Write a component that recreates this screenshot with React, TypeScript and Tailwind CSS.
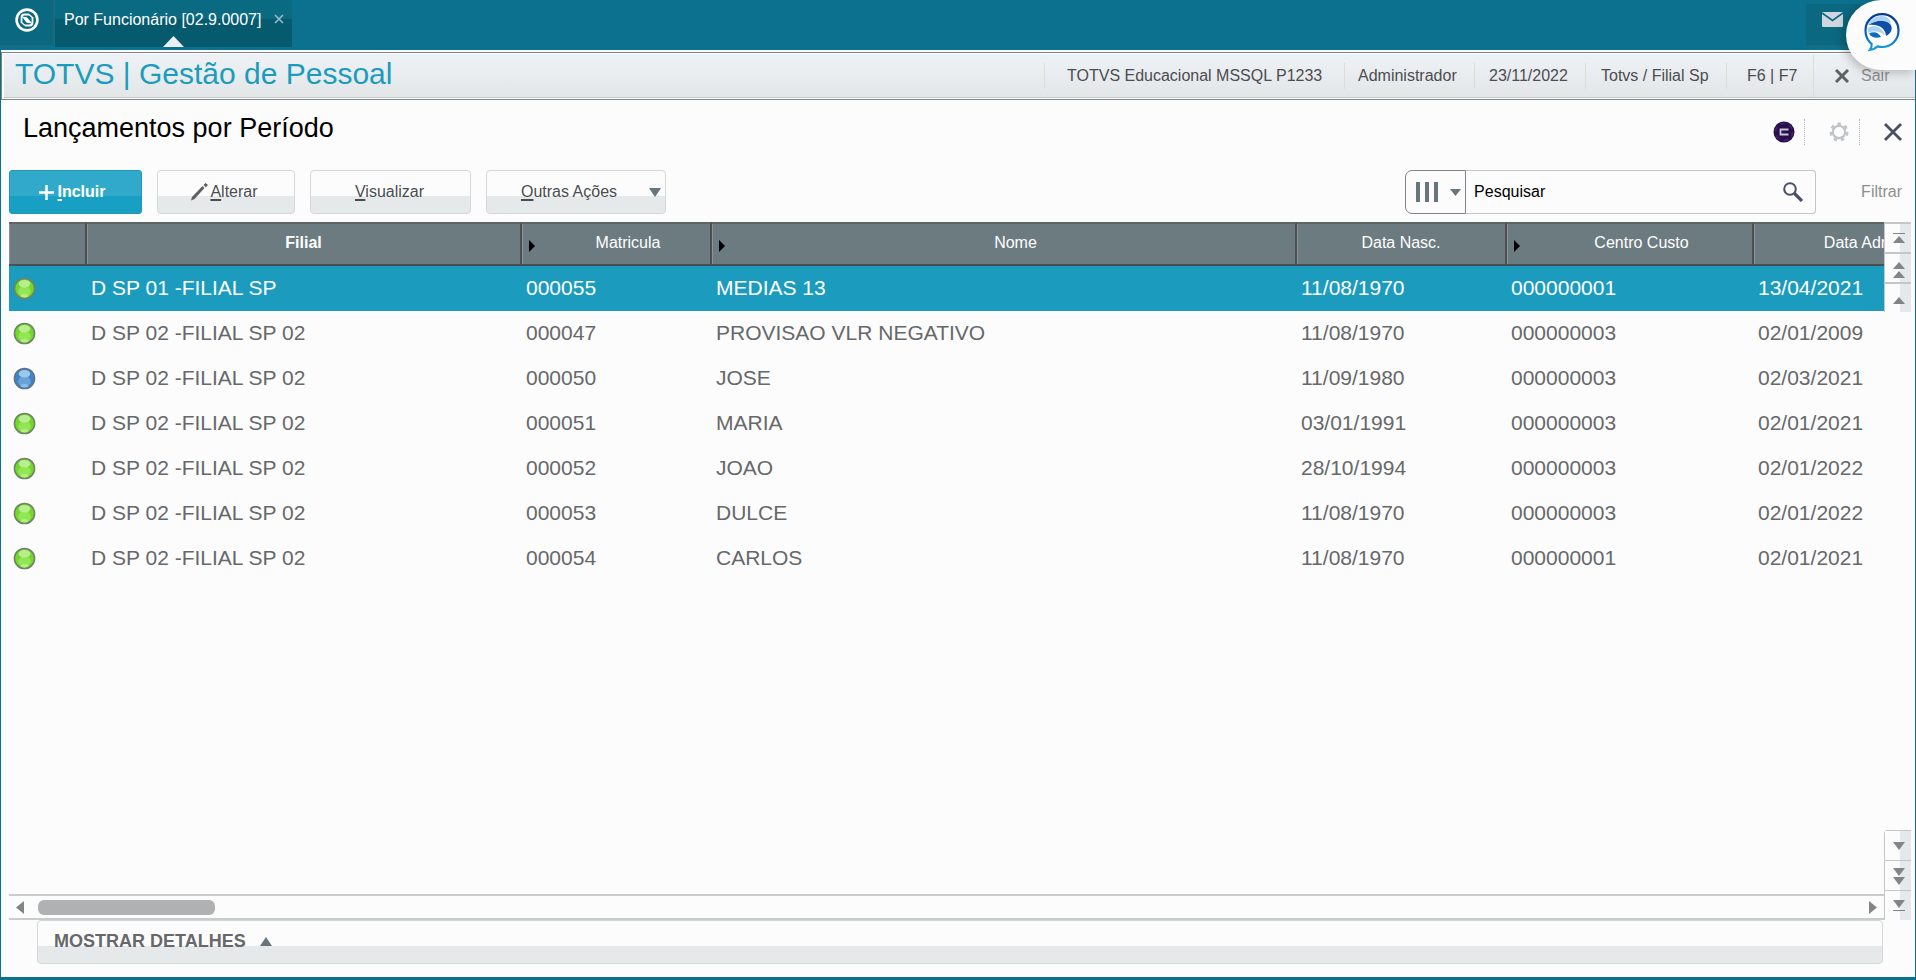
import { useState } from 'react';

type Employee = {
  status: 'green' | 'blue';
  filial: string;
  matricula: string;
  nome: string;
  nasc: string;
  custo: string;
  admissao: string;
};

const employees: Employee[] = [
  { status: 'green', filial: 'D SP 01 -FILIAL SP', matricula: '000055', nome: 'MEDIAS 13', nasc: '11/08/1970', custo: '000000001', admissao: '13/04/2021' },
  { status: 'green', filial: 'D SP 02 -FILIAL SP 02', matricula: '000047', nome: 'PROVISAO VLR NEGATIVO', nasc: '11/08/1970', custo: '000000003', admissao: '02/01/2009' },
  { status: 'blue', filial: 'D SP 02 -FILIAL SP 02', matricula: '000050', nome: 'JOSE', nasc: '11/09/1980', custo: '000000003', admissao: '02/03/2021' },
  { status: 'green', filial: 'D SP 02 -FILIAL SP 02', matricula: '000051', nome: 'MARIA', nasc: '03/01/1991', custo: '000000003', admissao: '02/01/2021' },
  { status: 'green', filial: 'D SP 02 -FILIAL SP 02', matricula: '000052', nome: 'JOAO', nasc: '28/10/1994', custo: '000000003', admissao: '02/01/2022' },
  { status: 'green', filial: 'D SP 02 -FILIAL SP 02', matricula: '000053', nome: 'DULCE', nasc: '11/08/1970', custo: '000000003', admissao: '02/01/2022' },
  { status: 'green', filial: 'D SP 02 -FILIAL SP 02', matricula: '000054', nome: 'CARLOS', nasc: '11/08/1970', custo: '000000001', admissao: '02/01/2021' },
];

const columns = [
  { label: '', width: 'w-[78px]', sortable: false },
  { label: 'Filial', width: 'w-[435px]', sortable: false, bold: true },
  { label: 'Matricula', width: 'w-[190px]', sortable: true },
  { label: 'Nome', width: 'w-[585px]', sortable: true },
  { label: 'Data Nasc.', width: 'w-[210px]', sortable: false },
  { label: 'Centro Custo', width: 'w-[247px]', sortable: true },
  { label: 'Data Admis.', width: 'w-[228px]', sortable: false },
];

const splitButton =
  'flex h-11 items-center justify-center rounded-[4px] border border-[#d3d8d8] bg-linear-to-b from-[#fcfcfc] from-60% to-[#e5e9ea] to-60% text-base text-[#4a4d50]';

function Logo() {
  return (
    <svg viewBox="0 0 24 24" className="size-6" fill="none" stroke="#fff">
      <circle cx="12" cy="12" r="10.4" strokeWidth="2.6" />
      <path d="M6.500 15V9.500C6.500 7.500 8 6.500 9.500 6.500H14" strokeWidth="1.800" />
      <path d="M17.500 9v5.500c0 2-1.500 3-3 3H10" strokeWidth="1.800" />
      <path d="M8.500 9.500l3 .5 4 4.500-3.500-.5z" fill="#fff" strokeWidth="1.400" />
      <path d="M14 6.500l3.500 3M6.500 14.500l3.500 3" strokeWidth="1.400" />
    </svg>
  );
}

function ChatLogo() {
  return (
    <svg viewBox="0 0 38 40" className="h-10 w-[38px]">
      <defs>
        <linearGradient id="ring" x1="0" y1="0" x2="0" y2="1">
          <stop offset="0" stopColor="#063a8c" />
          <stop offset="0.5" stopColor="#0a5cb5" />
          <stop offset="1" stopColor="#10a5e0" />
        </linearGradient>
      </defs>
      <path d="M19 2.200c9.400 0 16.500 7 16.500 16.300S28.500 35 19 35c-1.500 0-3-.2-4.400-.6-2.500 2.300-5 3.400-7.800 3.600 1.700-2.200 2.200-4 1.800-6.200C4.700 28.800 2.500 24 2.500 18.500 2.500 9.200 9.600 2.200 19 2.200z" fill="#fff" stroke="url(#ring)" strokeWidth="2.200" />
      <path d="M5 13C7.500 7 12.500 4 18.500 4c5.500 0 9 3.500 9.500 8-5-4.500-14-5-23 1z" fill="#a9d2f0" />
      <path d="M5.500 13c6-4.500 16-6 21-1.500 4.500 4 1.500 10.500-3.500 12.500 0-6-6-12.500-17.500-11z" fill="#0b4fa8" />
      <path d="M4.500 16c6-3.500 15-2 17.500 8-3-4-9-6-17-3z" fill="#a9d2f0" />
      <path d="M6 21.500c4.500-2.500 9.500-1.500 12 3.500-4.500 1.500-9.500 1-12-3.500z" fill="#0b6cc0" />
    </svg>
  );
}

function StatusBall({ color }: { color: Employee['status'] }) {
  const green = color === 'green';
  return (
    <svg viewBox="0 0 24 24" className="block size-[23px]" role="img" aria-label={green ? 'Ativo' : 'Férias'}>
      <circle cx="12" cy="12" r="10.500" fill={green ? '#75d62c' : '#3f84c8'} stroke={green ? '#6d8468' : '#5f7488'} strokeWidth="1.600" />
      <ellipse cx="12" cy="15" rx="6.500" ry="5.500" fill={green ? '#92e654' : '#6aa2d8'} />
      <ellipse cx="12" cy="7" rx="6" ry="4" fill={green ? '#b8ee90' : '#9cc8ec'} />
      <ellipse cx="12" cy="19.500" rx="4" ry="1.800" fill={green ? '#b4f080' : '#8cc0e8'} />
    </svg>
  );
}

function Triangle({ dir, className }: { dir: 'up' | 'down' | 'left' | 'right'; className: string }) {
  const points = {
    up: '0,10 5,0 10,10',
    down: '0,0 10,0 5,10',
    left: '10,0 10,10 0,5',
    right: '0,0 10,5 0,10',
  };
  return (
    <svg viewBox="0 0 10 10" preserveAspectRatio="none" className={className} fill="currentColor">
      <polygon points={points[dir]} />
    </svg>
  );
}

function TopBar() {
  return (
    <div className="flex h-[50px] shrink-0 bg-[#0b718e]">
      <button aria-label="Menu" className="flex h-[46px] w-[54px] items-start justify-center border-r border-b border-[#2b6272] bg-[#0a6880] pt-2">
        <Logo />
      </button>
      <div className="relative ml-px flex h-[47px] w-[237px] items-start bg-linear-to-b from-[#0a6a82] from-40% to-[#065a6d] to-40% pt-2 pl-[9px]">
        <span className="text-base leading-6 whitespace-nowrap text-white">Por Funcionário [02.9.0007]</span>
        <button aria-label="Fechar aba" className="mt-[6px] ml-[13px] text-[#9dbcc5]">
          <svg viewBox="0 0 10 10" className="size-[10px]" stroke="currentColor" strokeWidth="1.600">
            <path d="M1 1l8 8M9 1l-8 8" />
          </svg>
        </button>
        <Triangle dir="up" className="absolute bottom-0 left-[108px] h-[11px] w-[21px] text-[#eceff2]" />
      </div>
      <button aria-label="Mensagens" className="mt-1 mr-[55px] ml-auto flex h-[42px] w-[55px] items-start border-b border-[#2b6272] bg-[#0a6880] pt-2 pl-4">
        <svg viewBox="0 0 21 15" className="h-[15px] w-[21px]">
          <rect width="21" height="15" rx="1" fill="#cfd6dd" />
          <path d="M0 1l10.500 7.500L21 1" fill="none" stroke="#0a6880" strokeWidth="1.600" />
        </svg>
      </button>
    </div>
  );
}

function HeaderBar() {
  const info = 'flex h-[26px] items-center border-l border-[#d9dfd2]';
  return (
    <header className="mt-0.5 h-12 shrink-0 border border-r-0 border-[#808386] bg-white pt-px pb-0.5 pl-0.5">
      <div className="flex h-11 items-center border-b border-[#c3c6c8] bg-linear-to-b from-[#eef2f6] to-[#e3e6e7] text-base text-[#4b4d50]">
        <h1 className="pb-1 pl-[11px] text-[30px] leading-9 text-[#1b9cbd]">TOTVS | Gestão de Pessoal</h1>
        <div className="ml-auto flex items-center whitespace-nowrap">
          <span className={`${info} w-[300px] pl-[22px]`}>TOTVS Educacional MSSQL P1233</span>
          <span className={`${info} w-[130px] pl-[13px]`}>Administrador</span>
          <span className={`${info} w-[111px] pl-[14px]`}>23/11/2022</span>
          <span className={`${info} w-[141px] pl-[15px]`}>Totvs / Filial Sp</span>
          <span className={`${info} w-[87px] pl-5`}>F6 | F7</span>
          <button className="flex h-[42px] w-[102px] items-center gap-3 border-l border-[#d9dfd2] pl-[21px] text-[#8d8f90]">
            <svg viewBox="0 0 14 14" className="size-[14px]" stroke="#5c6266" strokeWidth="3">
              <path d="M1 1l12 12M13 1L1 13" />
            </svg>
            Sair
          </button>
        </div>
      </div>
    </header>
  );
}

function TitleRow() {
  return (
    <div className="flex h-[70px] shrink-0 items-start justify-between pl-[22px]">
      <h2 className="pt-[10px] text-[27px] leading-9 text-black">Lançamentos por Período</h2>
      <div className="flex h-16 items-center pr-[13px]">
        <button aria-label="Ajuda" className="mr-[9px]">
          <svg viewBox="0 0 22 22" className="size-[22px]">
            <circle cx="11" cy="11" r="10.500" fill="#24104a" />
            <circle cx="11" cy="11" r="8.500" fill="none" stroke="#4b1a6c" strokeWidth="2" strokeDasharray="5 4" />
            <path d="M15.500 8.500H7.500v5h8" fill="none" stroke="#c9c5d8" strokeWidth="1.800" />
          </svg>
        </button>
        <span className="h-[26px] border-l border-dotted border-[#b5b8ba]" />
        <button aria-label="Configurações" className="mr-[10px] ml-6">
          <svg viewBox="0 0 20 20" className="size-5" fill="none" stroke="#c0c4c8">
            <circle cx="10" cy="10" r="6.200" strokeWidth="2.200" />
            <circle cx="10" cy="10" r="8.200" strokeWidth="2.600" strokeDasharray="3.600 3.760" />
          </svg>
        </button>
        <span className="h-[26px] border-l border-dotted border-[#b5b8ba]" />
        <button aria-label="Fechar" className="ml-6">
          <svg viewBox="0 0 18 18" className="size-[18px]" stroke="#4a5064" strokeWidth="2.800">
            <path d="M1 1l16 16M17 1L1 17" />
          </svg>
        </button>
      </div>
    </div>
  );
}

function Toolbar() {
  const [term, setTerm] = useState('Pesquisar');
  return (
    <div className="mb-2 flex h-11 shrink-0 items-center pl-2">
      <button className="flex h-11 w-[133px] items-center justify-center gap-[3px] rounded-[3px] border border-[#2396b8] bg-linear-to-b from-[#30a9ca] from-60% to-[#179fc4] to-60% pr-[6px] text-base font-bold text-white">
        <svg viewBox="0 0 15 15" className="size-[15px]" stroke="#fff" strokeWidth="2.500">
          <path d="M7.500 0v15M0 7.500h15" />
        </svg>
        <span><span className="underline decoration-2 underline-offset-2">I</span>ncluir</span>
      </button>
      <button className={`${splitButton} ml-[15px] w-[138px] gap-0.5 pr-1`}>
        <svg viewBox="0 0 18 18" className="size-[18px]" fill="#5b6064">
          <path d="M1 17.500l1-3.500L12.500 3l2 2L4.500 16z" />
          <path d="M13.500 2l2-2L18 2l-2.200 2.200z" />
        </svg>
        <span><span className="underline decoration-2 underline-offset-2">A</span>lterar</span>
      </button>
      <button className={`${splitButton} ml-[15px] w-[161px] pr-0.5`}>
        <span><span className="underline decoration-2 underline-offset-2">V</span>isualizar</span>
      </button>
      <button className={`${splitButton} ml-[15px] w-[180px] pl-[30px]`}>
        <span><span className="underline decoration-2 underline-offset-2">O</span>utras Ações</span>
        <Triangle dir="down" className="ml-8 h-[9px] w-3 text-[#66767c]" />
      </button>

      <div className="ml-auto flex h-11 w-[411px]">
        <button aria-label="Escolher colunas" className="flex w-[61px] items-center rounded-l-[7px] border border-[#808487] pl-[10px]">
          <span className="flex gap-[5px]">
            <span className="h-5 w-1 bg-[#66767c]" />
            <span className="h-5 w-1 bg-[#66767c]" />
            <span className="h-5 w-1 bg-[#66767c]" />
          </span>
          <Triangle dir="down" className="ml-3 h-[7px] w-[11px] text-[#66767c]" />
        </button>
        <div className="flex flex-1 items-center rounded-r-[4px] border border-l-0 border-[#c3c7c8]">
          <input
            aria-label="Pesquisar"
            value={term}
            onChange={(e) => setTerm(e.target.value)}
            className="h-full min-w-0 flex-1 bg-transparent pl-2 text-base text-black outline-none"
          />
          <button aria-label="Buscar" className="mr-3">
            <svg viewBox="0 0 20 20" className="size-5" fill="none" stroke="#4a5064">
              <circle cx="7" cy="7" r="5.800" strokeWidth="2" />
              <path d="M11.500 11.500l7.500 7.500" strokeWidth="3.200" />
            </svg>
          </button>
        </div>
      </div>
      <button className="mr-[13px] ml-[45px] text-base text-[#8d8f90]">Filtrar</button>
    </div>
  );
}

function Grid() {
  const [selected, setSelected] = useState('000055');
  return (
    <div className="min-w-0 flex-1 overflow-hidden">
      <table className="w-[1973px] table-fixed border-separate border-spacing-0">
        <thead>
          <tr className="h-11 bg-[#6c7b80]">
            {columns.map((c) => (
              <th
                key={c.label}
                className={`${c.width} ${c.bold ? 'font-bold' : 'font-normal'} relative border-t-2 border-r-2 border-b-2 border-[#4c4f52] border-t-[#5f6467] p-0 pb-0.5 text-base text-white shadow-[inset_1px_0_0_#8c9496]`}
              >
                {c.sortable && <Triangle dir="right" className="absolute top-4 left-[7px] h-3 w-[6px] text-black" />}
                {c.sortable ? <span className="pl-6">{c.label}</span> : c.label}
              </th>
            ))}
          </tr>
        </thead>
        <tbody>
          {employees.map((e) => (
            <tr
              key={e.matricula}
              onClick={() => setSelected(e.matricula)}
              className={`${selected === e.matricula ? 'bg-[#1b9bbd] text-white' : 'text-[#66686a]'} h-[45px] text-[21px] leading-6`}
            >
              <td className="p-0 pl-1"><StatusBall color={e.status} /></td>
              <td className="p-0 pb-0.5 pl-1">{e.filial}</td>
              <td className="p-0 pb-0.5 pl-1">{e.matricula}</td>
              <td className="p-0 pb-0.5 pl-1">{e.nome}</td>
              <td className="p-0 pb-0.5 pl-1">{e.nasc}</td>
              <td className="p-0 pb-0.5 pl-1">{e.custo}</td>
              <td className="p-0 pb-0.5 pl-1">{e.admissao}</td>
            </tr>
          ))}
        </tbody>
      </table>
    </div>
  );
}

function SideNav() {
  const cell =
    'flex w-full flex-col items-center justify-center border-[#c3c7c8] bg-linear-to-r from-[#fcfcfc] from-55% to-[#e5e9ed] to-60% pl-0.5 text-[#828587]';
  return (
    <div className="flex w-[27px] shrink-0 flex-col justify-between">
      <div className="border-l border-[#c3c7c8]">
        <button aria-label="Primeiro" className={`${cell} h-8 gap-0.5 border-t-2 border-b-2`}>
          <span className="h-px w-3 bg-[#828587]" />
          <Triangle dir="up" className="h-[7px] w-3" />
        </button>
        <button aria-label="Página anterior" className={`${cell} h-[30px] gap-0.5 border-b-2 pt-1`}>
          <Triangle dir="up" className="h-[7px] w-3" />
          <Triangle dir="up" className="h-[7px] w-3" />
        </button>
        <button aria-label="Anterior" className={`${cell} h-7 pt-1`}>
          <Triangle dir="up" className="h-[7px] w-3" />
        </button>
      </div>
      <div className="rounded-tl-[4px] border-t border-l border-[#c3c7c8]">
        <button aria-label="Próximo" className={`${cell} h-[30px] border-b`}>
          <Triangle dir="down" className="h-2 w-3" />
        </button>
        <button aria-label="Próxima página" className={`${cell} h-[30px] gap-px border-b pt-0.5`}>
          <Triangle dir="down" className="h-2 w-3" />
          <Triangle dir="down" className="h-2 w-3" />
        </button>
        <button aria-label="Último" className={`${cell} h-[29px] gap-0.5`}>
          <Triangle dir="down" className="h-2 w-3" />
          <span className="h-px w-3 bg-[#828587]" />
        </button>
      </div>
    </div>
  );
}

function HorizontalScroll() {
  return (
    <div className="flex h-[26px] shrink-0 items-center border-t-2 border-b-2 border-[#c8cccd] px-[7px] text-[#828587]">
      <button aria-label="Rolar para a esquerda"><Triangle dir="left" className="h-[13px] w-2" /></button>
      <div className="mx-[14px] h-[15px] w-[177px] rounded-[6px] bg-[#b0b1b3]" />
      <button aria-label="Rolar para a direita" className="ml-auto"><Triangle dir="right" className="h-[13px] w-2" /></button>
    </div>
  );
}

export default function App() {
  const [details, setDetails] = useState(false);
  return (
    <div className="relative flex h-screen flex-col overflow-hidden bg-[#fcfcfc] font-['Liberation_Sans',Arial,sans-serif]">
      <TopBar />
      <div className="flex min-h-0 flex-1 flex-col border-x border-b-[3px] border-[#0b718e]">
        <HeaderBar />
        <TitleRow />
        <Toolbar />
        <div className="flex min-h-0 flex-1 pr-1 pl-2">
          <div className="flex min-w-0 flex-1 flex-col">
            <Grid />
            <HorizontalScroll />
          </div>
          <SideNav />
        </div>
        <button
          onClick={() => setDetails(!details)}
          aria-expanded={details}
          className={`${splitButton} mr-8 mb-[13px] ml-9 shrink-0 justify-start gap-[14px] pb-0.5 pl-4 text-[18px] font-bold text-[#66686a]`}
        >
          MOSTRAR DETALHES
          <Triangle dir="up" className="h-[9px] w-3 text-[#66767c]" />
        </button>
      </div>
      {/* floating chat bubble */}
      <button aria-label="Chat" className="absolute top-0 right-0 flex h-[70px] w-[70px] items-start justify-end rounded-l-full bg-[#fcfcfc] pt-3 pr-[15px] shadow-[-3px_3px_10px_#00000038]">
        <ChatLogo />
      </button>
    </div>
  );
}
